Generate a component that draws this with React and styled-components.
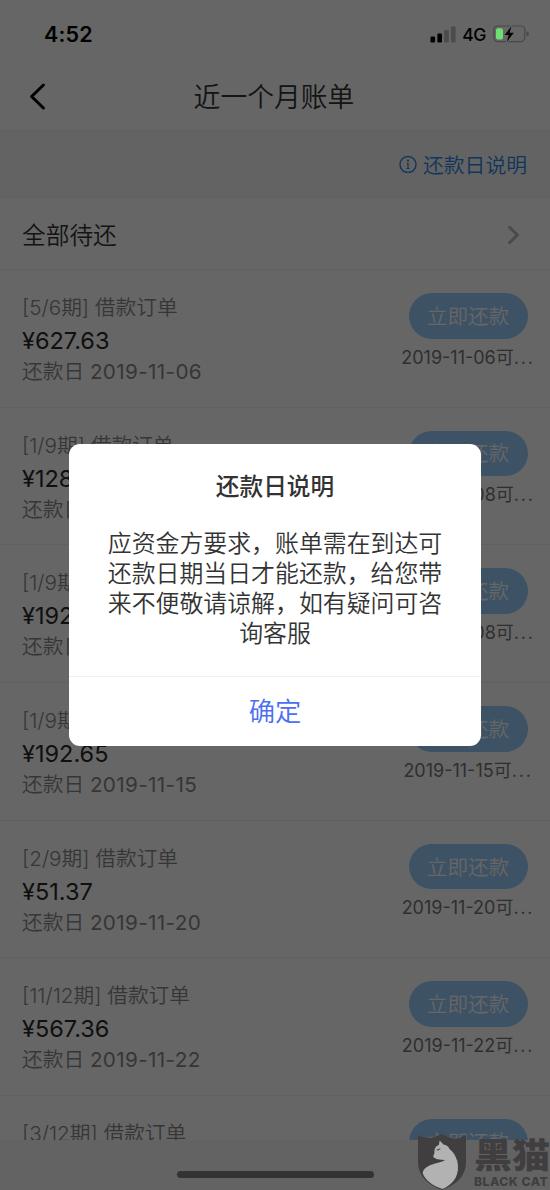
import React from 'react';
import styled, { createGlobalStyle } from 'styled-components';

const GlobalStyle = createGlobalStyle`
  * { box-sizing: border-box; }
  body {
    margin: 0;
    font-family: Inter, "Noto Sans CJK SC", sans-serif;
    -webkit-font-smoothing: antialiased;
  }
`;

const Screen = styled.div`
  position: relative;
  display: flex;
  flex-direction: column;
  width: 550px;
  height: 1190px;
  overflow: hidden;
  background: #f7f7f7;
`;

const Header = styled.header`
  display: flex;
  flex-direction: column;
  height: 129px;
  background: #fff;
`;

const StatusBar = styled.div`
  position: relative;
  z-index: 3;
  display: flex;
  align-items: center;
  justify-content: space-between;
  height: 68px;
  padding: 0 21px 0 44px;
  color: #000;
`;

const Clock = styled.span`
  font-size: 21.5px;
  font-weight: 600;
  letter-spacing: 0.2px;
`;

const StatusIcons = styled.div`
  display: flex;
  align-items: center;
`;

const Network = styled.span`
  margin: 0 7px 0 6px;
  font-size: 17.6px;
  font-weight: 500;
  letter-spacing: -0.5px;
`;

const NavBar = styled.div`
  display: grid;
  grid-template-columns: 60px 1fr 60px;
  align-items: center;
  height: 57px;
  padding-left: 29px;
  padding-right: 31px;
`;

const NavTitle = styled.h1`
  margin: 0;
  color: #333;
  font-size: 26.8px;
  font-weight: 350;
  line-height: 40px;
  text-align: center;
`;

const HelpBar = styled.div`
  display: flex;
  align-items: center;
  justify-content: flex-end;
  gap: 6px;
  height: 70px;
  padding-right: 23px;
  padding-bottom: 1px;
  color: #2b87e3;
  font-size: 20.8px;
  font-weight: 350;
`;

const AllBills = styled.div`
  display: flex;
  align-items: center;
  justify-content: space-between;
  height: 70px;
  padding: 1px 30px 0 22px;
  background: #fff;
  color: #333;
  font-size: 23.7px;
  font-weight: 350;
`;

const AllBillsLabel = styled.span`
  padding-bottom: 2px;
`;

const List = styled.div`
  height: 871px;
  overflow: hidden;
  background: #fff;
`;

const Bill = styled.div`
  display: flex;
  justify-content: space-between;
  height: 137.7px;
  padding: 23px 17px 0 22px;
  border-top: 1px solid #f0f0f0;
`;

const BillInfo = styled.div`
  display: flex;
  flex-direction: column;
`;

const Period = styled.span`
  height: 30px;
  color: #888;
  font-size: 20.7px;
  font-weight: 350;
  line-height: 30px;
  white-space: nowrap;
`;

const Amount = styled.span`
  height: 35px;
  color: #2a2a2a;
  font-size: 23.5px;
  font-weight: 400;
  line-height: 35px;
`;

const DueDate = styled(Period)`
  height: 28px;
  line-height: 28px;
`;

const DueDay = styled.span`
  font-weight: 400;
  letter-spacing: 0.35px;
`;

const BillAction = styled.div`
  display: flex;
  flex-direction: column;
  align-items: center;
  width: 130px;
`;

const PayButton = styled.button`
  width: 119px;
  height: 45.5px;
  padding: 0 0 2px;
  border: 0;
  border-radius: 23px;
  background: #98cdfb;
  color: #fff;
  font-family: inherit;
  font-size: 20.6px;
  font-weight: 350;
`;

const PayHint = styled.span`
  margin-top: 6px;
  color: #777;
  font-size: 18px;
  font-weight: 400;
  line-height: 26px;
  white-space: nowrap;
`;

const Dots = styled.span`
  letter-spacing: 1.8px;
`;

const Mask = styled.div`
  position: absolute;
  inset: 0;
  z-index: 2;
  display: flex;
  justify-content: center;
  align-items: flex-start;
  padding-top: 444px;
  background: rgba(0, 0, 0, 0.6);
`;

const Dialog = styled.div`
  display: flex;
  flex-direction: column;
  width: 412px;
  height: 302px;
  border-radius: 11px;
  background: #fff;
`;

const DialogTitle = styled.h2`
  margin: 25px 0 0;
  color: #333;
  font-size: 23.7px;
  font-weight: 500;
  line-height: 36px;
  text-align: center;
`;

const DialogBody = styled.p`
  flex: 1;
  margin: 24px 36px 0;
  color: #333;
  font-size: 23.9px;
  font-weight: 350;
  line-height: 30px;
  text-align: center;
`;

const ConfirmButton = styled.button`
  height: 70px;
  padding: 0 0 4px;
  border: 0;
  border-top: 1px solid #f0f0f0;
  background: none;
  color: #4a6ef5;
  font-family: inherit;
  font-size: 26.3px;
  font-weight: 350;
`;

const HomeIndicator = styled.div`
  position: absolute;
  z-index: 3;
  left: 177px;
  bottom: 12px;
  width: 197px;
  height: 7px;
  border-radius: 4px;
  background: #333;
`;

const Watermark = styled.div`
  position: absolute;
  z-index: 4;
  right: 0;
  bottom: 0;
  display: flex;
  gap: 8px;
  width: 132px;
  height: 56px;
  color: #403e3f;
`;

const WatermarkText = styled.div`
  display: flex;
  flex-direction: column;
  white-space: nowrap;
`;

const WatermarkName = styled.span`
  height: 40px;
  font-family: "Noto Sans CJK SC", sans-serif;
  font-size: 38px;
  font-weight: 900;
  line-height: 40px;
  transform: scaleY(0.9);
`;

const WatermarkLatin = styled.span`
  font-size: 12.2px;
  font-weight: 800;
  line-height: 16px;
  letter-spacing: 0.5px;
`;

const Signal = () => (
  <svg width="26" height="17" viewBox="0 0 26 17">
    <rect x="0.5" y="10.5" width="4.6" height="6" rx="1.3" fill="#000" />
    <rect x="7.4" y="7.5" width="4.6" height="9" rx="1.3" fill="#000" />
    <rect x="14.2" y="4" width="4.6" height="12.5" rx="1.3" fill="#4c4c4c" />
    <rect x="21" y="0.5" width="4.6" height="16" rx="1.3" fill="#4c4c4c" />
  </svg>
);

const Battery = () => (
  <svg width="36" height="18" viewBox="0 0 36 18">
    <rect x="0.8" y="1" width="31" height="15.6" rx="4" fill="none" stroke="#484848" strokeWidth="1.2" />
    <path d="M33.5 6.2Q36 7 36 8.8T33.5 11.4Z" fill="#484848" />
    <rect x="3" y="3.2" width="7" height="11.2" rx="2" fill="#6fdf73" />
    <path
      d="M18.4 1.2L11.7 10H15.7L13.8 16.8L20.8 7.7H16.6Z"
      fill="#000"
      stroke="#666"
      strokeWidth="2.2"
      paintOrder="stroke"
      strokeLinejoin="round"
    />
  </svg>
);

const BackIcon = () => (
  <svg width="18" height="28" viewBox="0 0 18 28">
    <path d="M14.4 2L2.6 13.5L14.4 25" fill="none" stroke="#000" strokeWidth="3" strokeLinecap="round" strokeLinejoin="round" />
  </svg>
);

const InfoIcon = () => (
  <svg width="18" height="18" viewBox="0 0 18 18">
    <circle cx="9" cy="9.5" r="8" fill="none" stroke="currentColor" strokeWidth="1.4" />
    <circle cx="9" cy="5.6" r="1.1" fill="currentColor" />
    <path d="M8 8.3H9V13.5M7.6 13.5H10.4" fill="none" stroke="currentColor" strokeWidth="1.2" />
  </svg>
);

const ChevronIcon = () => (
  <svg width="13" height="20" viewBox="0 0 13 20">
    <path d="M2.6 2.4L10.4 10L2.6 17.6" fill="none" stroke="#b8b8b8" strokeWidth="3" strokeLinecap="round" strokeLinejoin="round" />
  </svg>
);

const CatShield = () => (
  <svg width="48" height="56" viewBox="0 0 48 56">
    <path d="M0 1Q6 5 12 4Q18 3 24 0Q30 4 36 4.5Q42 5 48 1V29Q47 48 24 56Q1 48 0 29Z" fill="#403e3f" />
    <path
      d="M21.6 6.5L25.5 10.5Q30 11 31.5 15Q36.5 18.5 39.3 27Q41.5 36 37.5 44Q33.5 51 24.7 55Q16 52.5 10 47Q5.5 42.5 4.7 39Q5 34.5 12 31.2Q16 29.5 21 28.5Q26 27.2 27 26Q24 25.8 19.5 25.2Q15 23.8 15.3 22Q17 19 16.5 15.5Q17.5 12 21 10.8Z"
      fill="#b2b2b2"
    />
    <path d="M18.7 15.6Q20.5 16.4 22.3 14.6" fill="none" stroke="#555" strokeWidth="1.2" />
  </svg>
);

const bills = [
  { period: '5/6', amount: '627.63', date: '2019-11-06' },
  { period: '1/9', amount: '128.42', date: '2019-11-08' },
  { period: '1/9', amount: '192.65', date: '2019-11-08' },
  { period: '1/9', amount: '192.65', date: '2019-11-15' },
  { period: '2/9', amount: '51.37', date: '2019-11-20' },
  { period: '11/12', amount: '567.36', date: '2019-11-22' },
  { period: '3/12', amount: '85.20', date: '2019-11-25' },
];

const BillRow = ({ period, amount, date }) => (
  <Bill>
    <BillInfo>
      <Period>[{period}期] 借款订单</Period>
      <Amount>¥{amount}</Amount>
      <DueDate>还款日 <DueDay>{date}</DueDay></DueDate>
    </BillInfo>
    <BillAction>
      <PayButton>立即还款</PayButton>
      <PayHint>{date}可<Dots>...</Dots></PayHint>
    </BillAction>
  </Bill>
);

export default function App() {
  return (
    <>
      <GlobalStyle />
      <Screen>
        <Header>
          <StatusBar>
            <Clock>4:52</Clock>
            <StatusIcons>
              <Signal />
              <Network>4G</Network>
              <Battery />
            </StatusIcons>
          </StatusBar>
          <NavBar>
            <BackIcon />
            <NavTitle>近一个月账单</NavTitle>
          </NavBar>
        </Header>
        <HelpBar>
          <InfoIcon />
          <span>还款日说明</span>
        </HelpBar>
        <AllBills>
          <AllBillsLabel>全部待还</AllBillsLabel>
          <ChevronIcon />
        </AllBills>
        <List>
          {bills.map((bill, i) => (
            <BillRow key={i} {...bill} />
          ))}
        </List>
        <Mask>
          <Dialog>
            <DialogTitle>还款日说明</DialogTitle>
            <DialogBody>
              应资金方要求，账单需在到达可还款日期当日才能还款，给您带来不便敬请谅解，如有疑问可咨询客服
            </DialogBody>
            <ConfirmButton>确定</ConfirmButton>
          </Dialog>
        </Mask>
        <HomeIndicator />
        <Watermark>
          <CatShield />
          <WatermarkText>
            <WatermarkName>黑猫</WatermarkName>
            <WatermarkLatin>BLACK CAT</WatermarkLatin>
          </WatermarkText>
        </Watermark>
      </Screen>
    </>
  );
}
